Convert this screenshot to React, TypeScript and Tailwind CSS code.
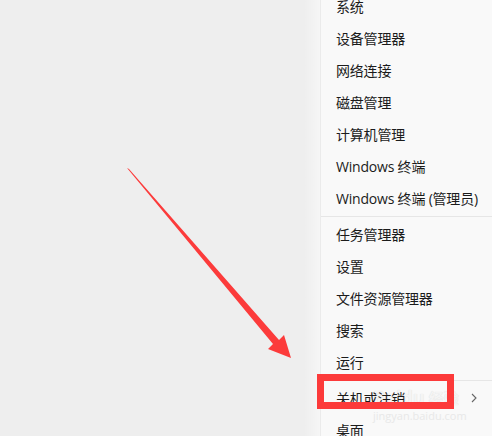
import React from 'react'

const groups: string[][] = [
  ['系统', '设备管理器', '网络连接', '磁盘管理', '计算机管理', 'Windows 终端', 'Windows 终端 (管理员)'],
  ['任务管理器', '设置', '文件资源管理器', '搜索', '运行'],
  ['关机或注销', '桌面'],
]

const font = { fontFamily: '"Segoe UI", "Open Sans", "Noto Sans CJK SC", sans-serif' }

const App: React.FC = () => {
  return (
    <div className="relative w-[492px] h-[436px] overflow-hidden flex bg-[#eeeeee]" style={font}>
      {/* desktop */}
      <div className="w-[304px] h-full bg-[#eeeeee]" />
      {/* menu shadow */}
      <div className="w-[16px] h-full bg-gradient-to-r from-[#eeeeee] to-[#f6f6f6]" />

      {/* context menu */}
      <div className="relative flex-1 h-full bg-[#f9f9f9] border-l border-[#ebebeb]">
        {/* baidu watermark, behind the menu text */}
        <div className="absolute left-[52px] top-[388px] flex flex-col items-start pointer-events-none">
          <div className="flex items-end gap-1">
            <span className="text-[18px] font-bold leading-none text-[#f4f4f4] [text-shadow:0_0_1px_#d9d9d9]">Baidu</span>
            <span className="text-[15px] font-bold leading-none text-[#f4f4f4] [text-shadow:0_0_1px_#d9d9d9]">经验</span>
          </div>
          <span className="mt-[4px] text-[11px] leading-none text-[#e8e8e8]">jingyan.baidu.com</span>
        </div>

        <div className="relative -mt-[10px] flex flex-col">
          {groups.map((items, gi) => (
            <div key={gi}>
              {gi > 0 && (
                <div className="h-[4px] flex items-center">
                  <div className="h-px w-full bg-[#e6e6e6]" />
                </div>
              )}
              {items.map((label) => (
                <div key={label} className="h-[32px] pl-[15px] pr-3 flex items-center justify-between whitespace-nowrap text-[14px] text-[#1b1b1b]">
                  <span className="tracking-[-0.2px]">{label}</span>
                  {label === '关机或注销' && (
                    <svg width="8" height="12" viewBox="0 0 8 12" className="mr-[2px]">
                      <path d="M2 2 L6 6 L2 10" fill="none" stroke="#666" strokeWidth="1.1" />
                    </svg>
                  )}
                </div>
              ))}
            </div>
          ))}
        </div>
      </div>

      {/* red annotations */}
      <div className="absolute left-[317px] top-[374px] w-[137px] h-[35px] border-[7px] border-[#fc3a3a]" />
      <svg className="absolute left-0 top-0" width="492" height="436" viewBox="0 0 492 436">
        <polygon
          points="127,168 129,169 279,340 284,335 291,358 268,349 273,344"
          fill="#fc3b3b"
        />
      </svg>
    </div>
  )
}

export default App
